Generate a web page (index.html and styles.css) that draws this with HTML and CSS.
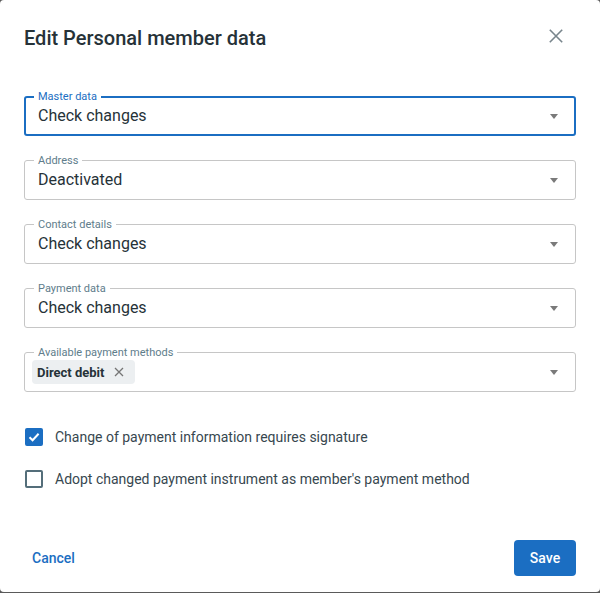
FILE: index.html
```html
<!DOCTYPE html>
<html>
<head>
<meta charset="utf-8">
<link rel="stylesheet" href="styles.css">
</head>
<body>
<div class="dialog">
  <div class="header">
    <h1 class="title">Edit Personal member data</h1>
    <button class="close" aria-label="Close">
      <svg width="14" height="14" viewBox="0 0 14 14"><path d="M0.8 0.8L13.2 13.2M13.2 0.8L0.8 13.2" stroke="#78858c" stroke-width="1.6" fill="none"/></svg>
    </button>
  </div>
  <div class="fields">
    <div class="field focused">
      <span class="label">Master data</span>
      <span class="value">Check changes</span>
      <span class="arrow"></span>
    </div>
    <div class="field">
      <span class="label">Address</span>
      <span class="value">Deactivated</span>
      <span class="arrow"></span>
    </div>
    <div class="field">
      <span class="label">Contact details</span>
      <span class="value">Check changes</span>
      <span class="arrow"></span>
    </div>
    <div class="field">
      <span class="label">Payment data</span>
      <span class="value">Check changes</span>
      <span class="arrow"></span>
    </div>
    <div class="field chips">
      <span class="label">Available payment methods</span>
      <span class="chip">Direct debit
        <svg width="10" height="10" viewBox="0 0 10 10"><path d="M1 1L9 9M9 1L1 9" stroke="#757575" stroke-width="1.3" fill="none"/></svg>
      </span>
      <span class="arrow"></span>
    </div>
  </div>
  <div class="checks">
    <label class="check">
      <span class="box checked">
        <svg width="14" height="14" viewBox="0 0 14 14"><path d="M2.5 7.2L5.6 10.2L11.6 3.8" stroke="#fff" stroke-width="2" fill="none"/></svg>
      </span>
      <span>Change of payment information requires signature</span>
    </label>
    <label class="check">
      <span class="box"></span>
      <span>Adopt changed payment instrument as member's payment method</span>
    </label>
  </div>
  <div class="footer">
    <button class="btn text">Cancel</button>
    <button class="btn primary">Save</button>
  </div>
</div>
</body>
</html>
```
FILE: styles.css
```css
* { box-sizing: border-box; }
html, body { margin: 0; padding: 0; }
body {
  background: #5a5a5a;
  font-family: Roboto, "Liberation Sans", sans-serif;
  width: 600px;
  height: 593px;
}
.dialog {
  width: 600px;
  height: 592px;
  background: #fff;
  border-radius: 4px;
  display: flex;
  flex-direction: column;
}
.header {
  display: flex;
  justify-content: space-between;
  align-items: center;
  padding: 24px 37px 0 24px;
  height: 52px;
}
.title {
  margin: 0;
  font-size: 20px;
  line-height: 28px;
  font-weight: 500;
  color: #263238;
}
.close {
  border: 0;
  background: none;
  padding: 0;
  width: 14px;
  height: 14px;
  display: flex;
  margin-top: -5px;
}
.fields {
  padding: 0 24px;
  margin-top: 44px;
  display: flex;
  flex-direction: column;
  gap: 24px;
}
.field {
  position: relative;
  height: 40px;
  border: 1px solid #c6c6c6;
  border-radius: 3px;
  display: flex;
  align-items: center;
  padding: 0 17px 0 13px;
}
.field.focused {
  border: 2px solid #1b6ec2;
  padding-left: 12px;
  padding-right: 16px;
}
.label {
  position: absolute;
  top: -6px;
  left: 9px;
  padding: 0 4px;
  background: #fff;
  font-size: 11px;
  line-height: 12px;
  color: #607d8b;
}
.focused .label {
  top: -7px;
  left: 8px;
  color: #1b6ec2;
}
.value {
  flex: 1;
  font-size: 16px;
  color: #263238;
  padding-bottom: 2px;
}
.arrow {
  width: 0;
  height: 0;
  border-left: 4px solid transparent;
  border-right: 4px solid transparent;
  border-top: 5px solid #7a7a7a;
  margin-top: 1px;
}
.field.chips {
  padding-left: 7px;
}
.chip {
  display: inline-flex;
  align-items: center;
  gap: 10px;
  height: 24px;
  padding: 0 11px 0 5px;
  background: #eceff1;
  border-radius: 4px;
  font-size: 13px;
  font-weight: 700;
  color: #263238;
  margin-right: auto;
}
.checks {
  margin-top: 24px;
  padding: 0 24px;
  display: flex;
  flex-direction: column;
}
.check {
  display: flex;
  align-items: center;
  height: 42px;
  gap: 12px;
  font-size: 14px;
  color: #37474f;
}
.box {
  width: 18px;
  height: 18px;
  border: 2px solid #546e7a;
  border-radius: 2px;
  margin-left: 1px;
  display: flex;
  align-items: center;
  justify-content: center;
}
.box.checked {
  background: #1b6ec2;
  border-color: #1b6ec2;
}
.footer {
  margin-top: 40px;
  padding: 0 24px;
  display: flex;
  justify-content: space-between;
  align-items: center;
}
.btn {
  font-family: Roboto, "Liberation Sans", sans-serif;
  font-size: 14px;
  font-weight: 500;
  height: 36px;
  border: 0;
  border-radius: 4px;
  padding: 0 8px;
  cursor: pointer;
}
.btn.text {
  background: none;
  color: #1b6ec2;
}
.btn.primary {
  background: #1b6ec2;
  color: #fff;
  width: 62px;
  padding: 0;
}
```
